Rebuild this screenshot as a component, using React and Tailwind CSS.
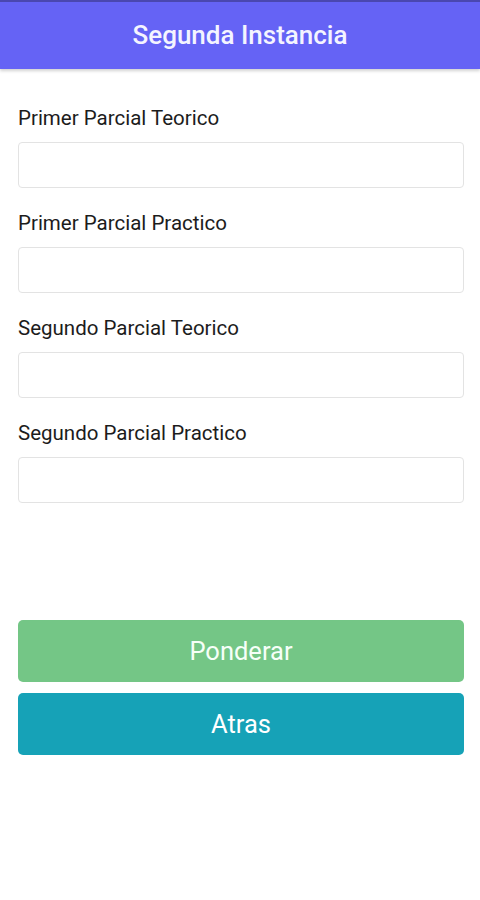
export default function App() {
  const fields = [
    "Primer Parcial Teorico",
    "Primer Parcial Practico",
    "Segundo Parcial Teorico",
    "Segundo Parcial Practico",
  ];
  return (
    <div className="min-h-[900px] bg-white" style={{ fontFamily: "Roboto, 'Liberation Sans', sans-serif" }}>
      <header className="h-[69px] border-t-2 border-[#4a47b0] bg-[#6563f5] flex items-center justify-center shadow-[0_2px_3px_rgba(0,0,0,0.18)]">
        <h1 className="text-[#f4f4ff] text-[26px] leading-[30px] font-medium pb-[1px]">Segunda Instancia</h1>
      </header>
      <div className="pl-[18px] pr-[16px] pt-[37px]">
        {fields.map((f, i) => (
          <div key={f} className={i > 0 ? "mt-[23px]" : ""}>
            <label className="block text-[20.5px] leading-[24px] text-[#1c1c1c]">{f}</label>
            <input className="mt-[12px] block w-full h-[46px] rounded-[4px] border border-[#e3e3e3] bg-white outline-none" />
          </div>
        ))}
        <div className="mt-[117px] flex flex-col gap-[11px]">
          <button className="h-[62px] w-full rounded-[5px] bg-[#74c686] text-[#f6fff8] text-[25.5px]">Ponderar</button>
          <button className="h-[62px] w-full rounded-[5px] bg-[#16a2b7] text-white text-[25.5px]">Atras</button>
        </div>
      </div>
    </div>
  );
}
